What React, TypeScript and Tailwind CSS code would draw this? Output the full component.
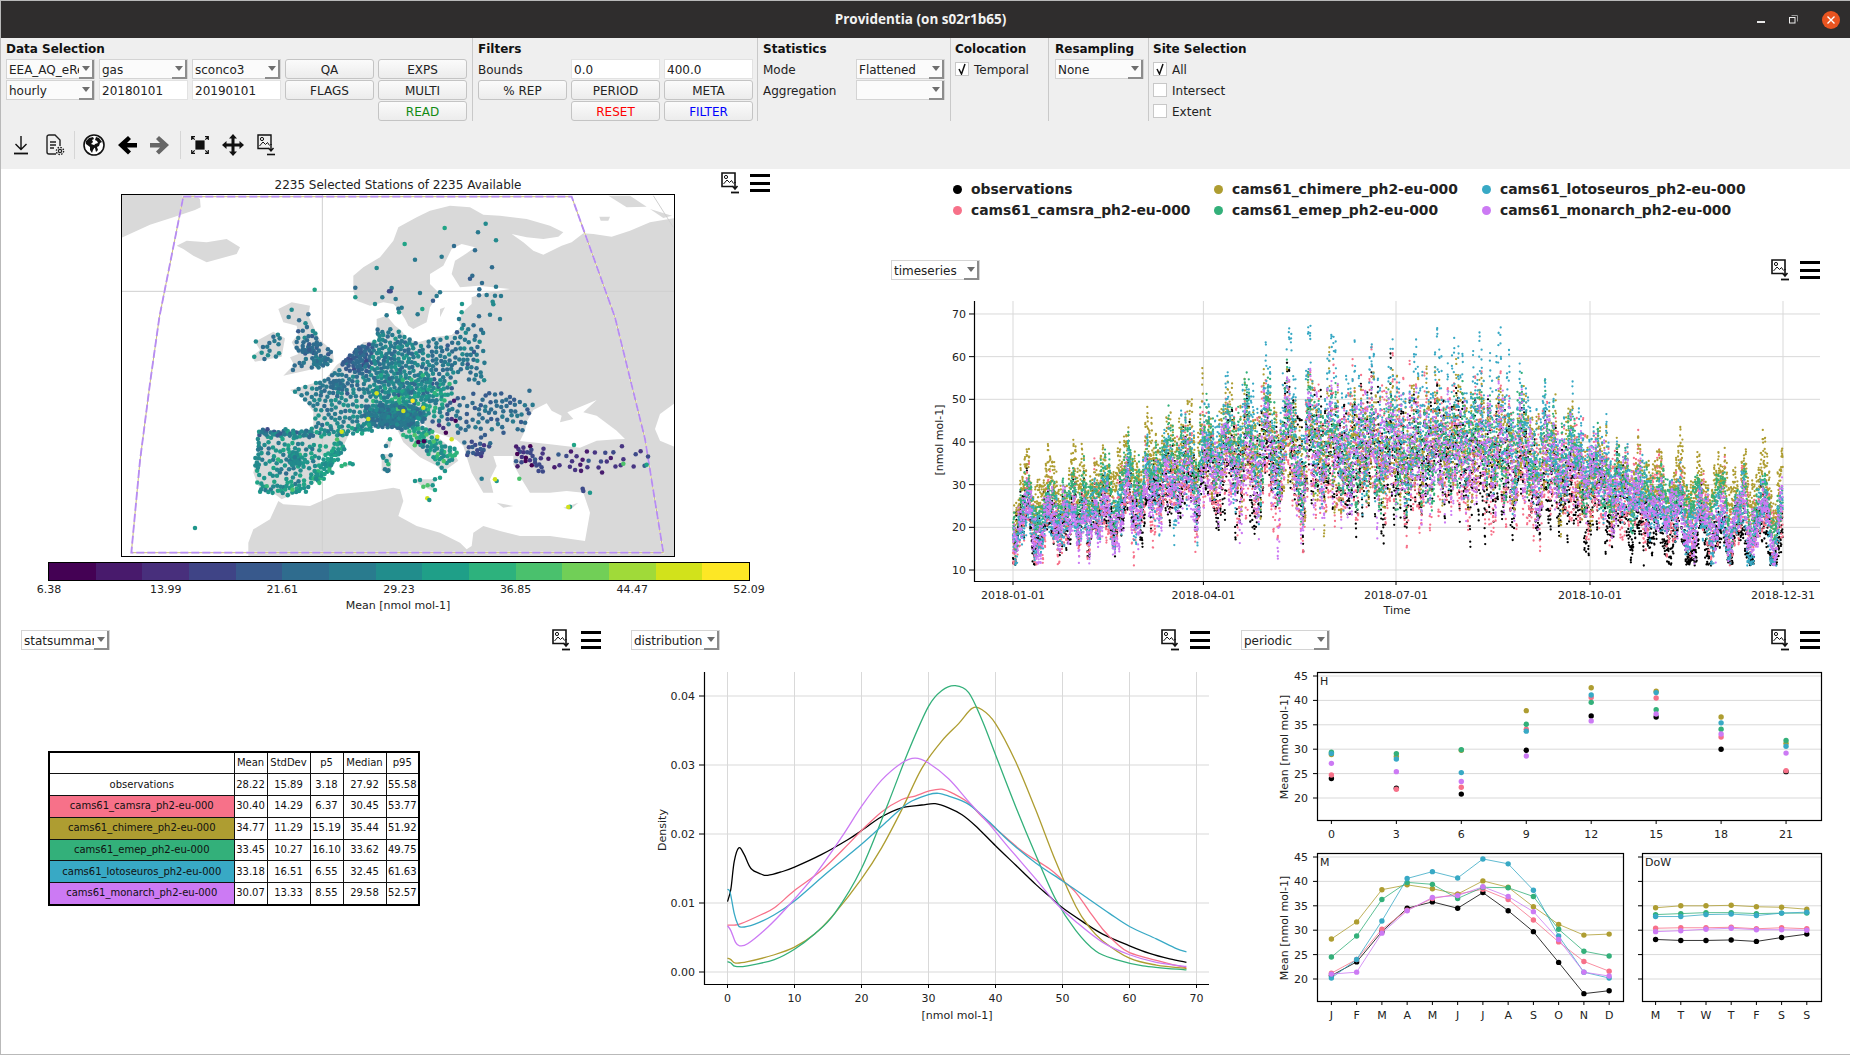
const COLORS = {
  observations: "#000000",
  camsra: "#f77189",
  chimere: "#ae9d31",
  emep: "#33b07a",
  lotoseuros: "#38a9c5",
  monarch: "#cc7af4",
};
const SERIES = [COLORS.observations, COLORS.camsra, COLORS.chimere, COLORS.emep, COLORS.lotoseuros, COLORS.monarch];

const GRID = "#d9d9d9";
const TXT = "#222222";

// seeded random so the picture stays the same on each load
const makeRng = (seed: number) => () => {
  seed = (seed + 0x6d2b79f5) | 0;
  let t = Math.imul(seed ^ (seed >>> 15), 1 | seed);
  t = (t + Math.imul(t ^ (t >>> 7), 61 | t)) ^ t;
  return ((t ^ (t >>> 14)) >>> 0) / 4294967296;
};

const VIRIDIS = ["#440154", "#481c6e", "#473582", "#3e4a89", "#365c8d", "#2f6c8e", "#29798e", "#238a8d", "#1f968b", "#20a486", "#2fb47c", "#4cc26c", "#74d055", "#a2da37", "#d0e11c", "#fde725"];

const MONTHLY = [
  [20.7, 23.5, 29.7, 34.5, 35.8, 34.5, 37.7, 34, 29.7, 23.4, 17, 17.6],
  [21.2, 24, 30.2, 34.1, 36.5, 37.4, 38.4, 36.3, 32.1, 27.6, 23.6, 21.6],
  [28.2, 31.7, 38.3, 39.3, 38.5, 37.4, 40.1, 38.8, 34.8, 31.2, 29, 29.2],
  [24.5, 28.8, 36.3, 39.8, 39.4, 36.5, 38.8, 38.7, 36.9, 30.2, 25.7, 24.7],
  [20.2, 24, 31.9, 40.6, 42, 40.7, 44.6, 43.6, 38.2, 28.8, 21.4, 20.2],
  [21, 21.4, 29.4, 34, 36.7, 37.1, 38.9, 36.9, 33.8, 28.1, 21.4, 20.6],
];
const HOURLY = [
  [24, 22, 20.8, 29.8, 36.8, 36.6, 30, 25.4],
  [24.7, 21.8, 22.2, 34.1, 40.6, 40.5, 32.5, 25.6],
  [28.9, 28.5, 29.8, 37.9, 42.6, 41.9, 36.6, 31.2],
  [29.4, 29.1, 29.9, 35.1, 39.6, 38.1, 34.1, 31.8],
  [29.1, 28, 25.2, 33.7, 41.1, 41.6, 35.4, 30.6],
  [27.1, 25.4, 23.4, 28.6, 35.8, 37.2, 33.1, 29.2],
];
const WEEKLY = [
  [28.1, 27.9, 27.9, 28, 27.7, 28.5, 29.2],
  [30.4, 30.5, 30.5, 30.6, 30.3, 30.5, 30.3],
  [34.6, 35, 35, 35.1, 34.8, 34.7, 34.3],
  [33.2, 33.4, 33.6, 33.6, 33.4, 33.5, 33.5],
  [32.8, 32.8, 33.2, 33.3, 33, 33.5, 33.7],
  [29.7, 29.9, 30.2, 30.4, 30.1, 30.1, 30],
];

const KDE: number[][][] = [
  [[0, 0.0102], [0.5, 0.012], [1, 0.016], [1.7, 0.018], [2.5, 0.017], [3.5, 0.015], [5, 0.0142], [6, 0.014], [8, 0.0145], [10, 0.0152], [14, 0.017], [18, 0.0192], [20, 0.0205], [23, 0.0225], [26, 0.0238], [29, 0.0242], [31, 0.0244], [33, 0.0238], [35, 0.0228], [37, 0.0212], [40, 0.0183], [43, 0.0155], [46, 0.0127], [48, 0.011], [50, 0.0093], [53, 0.0073], [56, 0.0055], [60, 0.0038], [63, 0.0027], [66, 0.0019], [68.5, 0.0014]],
  [[0, 0.0068], [1, 0.0068], [2, 0.007], [5, 0.0083], [7, 0.0093], [10, 0.0118], [14, 0.0147], [18, 0.0185], [20, 0.0205], [23, 0.0232], [26, 0.025], [28, 0.0255], [30, 0.0262], [32, 0.0265], [34, 0.0257], [36, 0.0245], [38, 0.0225], [40, 0.0208], [44, 0.0175], [48, 0.015], [50, 0.0133], [52, 0.0115], [54, 0.0088], [56, 0.0062], [58, 0.0042], [60, 0.0028], [64, 0.0017], [68.5, 0.0006]],
  [[0, 0.002], [0.5, 0.0018], [1.2, 0.0013], [3, 0.0015], [7, 0.0025], [10, 0.0036], [13, 0.0055], [16, 0.0085], [20, 0.0135], [23, 0.018], [26, 0.0235], [29, 0.0295], [32, 0.0335], [34.5, 0.036], [36.5, 0.0382], [38, 0.038], [40, 0.036], [43, 0.0305], [46, 0.0235], [49, 0.016], [52, 0.0095], [54, 0.0065], [56, 0.0045], [60, 0.002], [64, 0.001], [68.5, 0.0005]],
  [[0, 0.0015], [0.5, 0.0013], [1.2, 0.0008], [3, 0.0009], [7, 0.0018], [10, 0.0033], [13, 0.0055], [16, 0.0085], [20, 0.015], [24, 0.0245], [27, 0.032], [30, 0.0385], [32, 0.0408], [34, 0.0415], [36, 0.0405], [38, 0.0365], [40, 0.0315], [43, 0.024], [46, 0.017], [49, 0.0105], [52, 0.006], [55, 0.003], [58, 0.0018], [62, 0.0009], [68.5, 0.0003]],
  [[0, 0.012], [0.4, 0.0115], [1, 0.0085], [1.5, 0.007], [2, 0.0065], [4, 0.0069], [7, 0.0083], [10, 0.0103], [15, 0.0145], [20, 0.0185], [24, 0.022], [27, 0.0245], [30, 0.0257], [31.5, 0.0259], [33, 0.0255], [36, 0.0243], [39, 0.0218], [42, 0.019], [46, 0.0158], [50, 0.0132], [53, 0.0112], [57, 0.0085], [60, 0.0066], [64, 0.0048], [67, 0.0034], [68.5, 0.0029]],
  [[0, 0.0067], [0.5, 0.006], [1.2, 0.0043], [1.8, 0.0038], [3, 0.0041], [6, 0.0065], [9, 0.0095], [13, 0.014], [17, 0.0195], [20, 0.024], [23, 0.0278], [26, 0.0303], [28, 0.031], [30, 0.0303], [33, 0.028], [36, 0.0247], [39, 0.0215], [42, 0.018], [46, 0.0135], [49, 0.01], [52, 0.0073], [56, 0.0043], [60, 0.0025], [64, 0.0014], [68.5, 0.0008]],
];

const TABLE = [
  { name: "observations", bg: "bg-white", v: ["28.22", "15.89", "3.18", "27.92", "55.58"] },
  { name: "cams61_camsra_ph2-eu-000", bg: "bg-[#f77189]", v: ["30.40", "14.29", "6.37", "30.45", "53.77"] },
  { name: "cams61_chimere_ph2-eu-000", bg: "bg-[#ae9d31]", v: ["34.77", "11.29", "15.19", "35.44", "51.92"] },
  { name: "cams61_emep_ph2-eu-000", bg: "bg-[#33b07a]", v: ["33.45", "10.27", "16.10", "33.62", "49.75"] },
  { name: "cams61_lotoseuros_ph2-eu-000", bg: "bg-[#38a9c5]", v: ["33.18", "16.51", "6.55", "32.45", "61.63"] },
  { name: "cams61_monarch_ph2-eu-000", bg: "bg-[#cc7af4]", v: ["30.07", "13.33", "8.55", "29.58", "52.57"] },
];

const LEGEND = [
  ["observations", COLORS.observations],
  ["cams61_chimere_ph2-eu-000", COLORS.chimere],
  ["cams61_lotoseuros_ph2-eu-000", COLORS.lotoseuros],
  ["cams61_camsra_ph2-eu-000", COLORS.camsra],
  ["cams61_emep_ph2-eu-000", COLORS.emep],
  ["cams61_monarch_ph2-eu-000", COLORS.monarch],
];

const lerp = (arr: number[], p: number) => {
  const c = Math.max(0, Math.min(arr.length - 1, p));
  const i = Math.min(arr.length - 2, Math.floor(c));
  return arr[i] + (arr[i + 1] - arr[i]) * (c - i);
};

// timeseries dots, one path per model
const buildTimeseries = () => {
  const r = makeRng(11);
  const waves = Array.from({ length: 9 }, () => ({ p: 3 + r() * 16, ph: r() * 6.28, a: 0.5 + r() }));
  const shared = (d: number) => waves.reduce((s, w) => s + w.a * Math.sin((d / w.p) * 6.28 + w.ph), 0) / 2.4;
  return SERIES.map((_, s) => {
    const rs = makeRng(40 + s * 7);
    const own = Array.from({ length: 5 }, () => ({ p: 4 + rs() * 14, ph: rs() * 6.28 }));
    const mean = HOURLY[s].reduce((a, b) => a + b, 0) / 8;
    const cyc = HOURLY[s].concat(HOURLY[s][0]);
    let d = "";
    let dayShift = 0;
    let dayAmp = 1;
    for (let h = 0; h < 8736; h += 2) {
      const day = h / 24;
      const summer = Math.max(0, Math.sin(((day - 50) / 260) * Math.PI));
      if (h % 24 === 0) {
        dayShift = (rs() - 0.5) * (4 + summer * 12);
        dayAmp = 0.5 + rs();
      }
      const season = 0.45 + 0.6 * summer;
      const diurnal = (lerp(cyc, (h % 24) / 3) - mean) * season * dayAmp;
      const ownN = own.reduce((a, w) => a + Math.sin((day / w.p) * 6.28 + w.ph), 0);
      let v = lerp(MONTHLY[s], day / 30.4 - 0.5) + shared(day) * (2 + season) + ownN + dayShift + diurnal + (rs() - 0.5) * 2.5;
      if (s === 4 && diurnal > 0 && day > 120 && day < 240) v += rs() * 6 * Math.max(0, shared(day) + 0.5);
      if (v < 13) v = 13 + (13 - v) * 0.1 - rs() * 2;
      if (v > 64) v = 64 + (v - 64) * 0.3;
      d += `M${(1013 + day * 2.115).toFixed(1)} ${(570 - (v - 10) * 4.267).toFixed(1)}h0`;
    }
    return d;
  });
};
const TS_PATHS = buildTimeseries();

const smoothPath = (pts: number[][]) => {
  let d = `M${pts[0][0]} ${pts[0][1]}`;
  for (let i = 0; i < pts.length - 1; i++) {
    const p0 = pts[Math.max(0, i - 1)];
    const p1 = pts[i];
    const p2 = pts[i + 1];
    const p3 = pts[Math.min(pts.length - 1, i + 2)];
    d += `C${p1[0] + (p2[0] - p0[0]) / 6} ${p1[1] + (p2[1] - p0[1]) / 6} ${p2[0] - (p3[0] - p1[0]) / 6} ${p2[1] - (p3[1] - p1[1]) / 6} ${p2[0]} ${p2[1]}`;
  }
  return d;
};

// map outlines: 3 units per pixel, origin at (150,194) of the page
const OCEAN = [-87, 132, 0, 92, 70, 70, 135, 48, 152, 40, 150, 15, 130, 0, 1575, 0, 1575, 72, 1500, 85, 1440, 110, 1385, 128, 1330, 120, 1300, 118, 1265, 145, 1235, 155, 1180, 182, 1150, 170, 1120, 145, 1085, 120, 1130, 130, 1180, 135, 1225, 128, 1240, 115, 1200, 95, 1130, 75, 1050, 65, 1000, 62, 960, 40, 900, 35, 840, 50, 800, 70, 745, 100, 730, 140, 690, 190, 640, 220, 610, 245, 610, 290, 620, 320, 660, 335, 700, 325, 730, 330, 745, 345, 765, 375, 775, 395, 790, 405, 830, 385, 840, 340, 868, 298, 840, 270, 840, 240, 880, 215, 905, 165, 935, 150, 975, 160, 950, 178, 915, 200, 905, 240, 930, 280, 985, 275, 1080, 285, 1000, 298, 965, 310, 965, 330, 945, 348, 925, 378, 933, 400, 905, 423, 860, 428, 805, 445, 770, 433, 755, 410, 735, 395, 710, 365, 680, 375, 680, 420, 683, 440, 640, 445, 600, 483, 560, 513, 520, 563, 490, 568, 420, 588, 460, 613, 490, 653, 490, 693, 480, 708, 325, 708, 320, 726, 325, 776, 310, 836, 325, 876, 375, 901, 395, 916, 440, 896, 490, 871, 510, 836, 510, 786, 580, 756, 590, 736, 600, 713, 660, 703, 700, 700, 740, 703, 760, 745, 810, 790, 860, 815, 880, 835, 875, 856, 855, 861, 890, 826, 925, 800, 900, 760, 860, 726, 810, 680, 785, 670, 810, 688, 850, 713, 920, 738, 940, 756, 965, 836, 1000, 896, 1030, 896, 1020, 856, 1040, 816, 1030, 786, 1090, 786, 1090, 811, 1115, 856, 1140, 896, 1200, 896, 1250, 891, 1300, 896, 1320, 956, 1305, 1041, 1200, 1026, 1110, 1026, 1050, 1011, 1000, 996, 970, 1016, 965, 1056, 950, 1066, 930, 1046, 870, 1016, 800, 996, 745, 966, 760, 921, 750, 886, 730, 881, 670, 891, 560, 901, 480, 936, 400, 931, 385, 921, 360, 976, 310, 1006, 295, 1046, 295, 1089, -87, 1089];
const SEAS = [
  [1130, 683, 1150, 648, 1190, 628, 1205, 650, 1235, 665, 1230, 685, 1270, 675, 1252, 655, 1340, 618, 1300, 655, 1340, 665, 1400, 710, 1425, 735, 1400, 736, 1340, 740, 1290, 761, 1200, 751, 1110, 741, 1125, 710],
  [1575, 627, 1530, 660, 1515, 705, 1530, 740, 1575, 759],
];
const ISLANDS = [
  [80, 155, 110, 140, 170, 145, 230, 135, 270, 160, 260, 180, 170, 205, 130, 185, 100, 165],
  [385, 345, 425, 325, 480, 335, 475, 365, 510, 438, 548, 470, 552, 503, 500, 523, 400, 545, 432, 512, 420, 490, 445, 480, 425, 445, 445, 420, 440, 395, 400, 385],
  [315, 443, 370, 413, 405, 433, 395, 488, 315, 503, 305, 488, 330, 468],
  [715, 736, 725, 731, 720, 761, 700, 756],
  [695, 781, 725, 781, 722, 836, 695, 831],
  [790, 856, 855, 856, 850, 891, 815, 876],
  [1040, 926, 1090, 936, 1060, 941],
  [1240, 941, 1285, 926, 1260, 948],
  [565, 816, 610, 806, 590, 820],
  [870, 345, 885, 340, 870, 370],
  [1375, 5, 1440, 5, 1490, 38, 1430, 40],
  [1348, 68, 1380, 68, 1375, 80, 1352, 80],
  [1500, 45, 1566, 65, 1540, 72],
];

const toPath = (p: number[]) => {
  let d = `M${p[0]} ${p[1]}`;
  for (let i = 2; i < p.length; i += 2) d += `L${p[i]} ${p[i + 1]}`;
  return d + "Z";
};

const inside = (p: number[], x: number, y: number) => {
  let hit = false;
  for (let i = 0, j = p.length - 2; i < p.length; j = i, i += 2) {
    if (p[i + 1] > y !== p[j + 1] > y && x < ((p[j] - p[i]) * (y - p[i + 1])) / (p[j + 1] - p[i + 1]) + p[i]) hit = !hit;
  }
  return hit;
};

const onLand = (x: number, y: number) => {
  if (ISLANDS.some((p) => inside(p, x, y))) return true;
  return !inside(OCEAN, x, y) && !SEAS.some((p) => inside(p, x, y));
};

type Cluster = [number, number, number, number, number, number, number, number];
// x0, x1, y0, y1, count, mean, spread, min gap
const CLUSTERS: Cluster[] = [
  [460, 510, 443, 488, 22, 0.3, 0.05, 7],
  [430, 550, 393, 533, 36, 0.36, 0.07, 10],
  [490, 540, 490, 515, 16, 0.38, 0.04, 7],
  [310, 400, 408, 498, 16, 0.42, 0.07, 12],
  [585, 660, 460, 530, 85, 0.3, 0.06, 7],
  [620, 820, 423, 583, 230, 0.42, 0.08, 9],
  [810, 990, 403, 553, 100, 0.38, 0.07, 11],
  [540, 580, 558, 588, 20, 0.35, 0.04, 7],
  [500, 640, 533, 603, 60, 0.38, 0.06, 10],
  [430, 670, 573, 703, 120, 0.45, 0.07, 12],
  [680, 890, 543, 653, 170, 0.5, 0.15, 8],
  [660, 810, 633, 700, 170, 0.39, 0.08, 5],
  [940, 1130, 598, 708, 70, 0.33, 0.06, 12],
  [850, 930, 593, 703, 26, 0.24, 0.15, 12],
  [320, 510, 726, 890, 105, 0.5, 0.11, 10],
  [420, 450, 781, 811, 20, 0.47, 0.05, 4],
  [940, 1020, 736, 796, 20, 0.25, 0.1, 8],
  [1090, 1180, 761, 831, 30, 0.13, 0.12, 9],
  [1200, 1490, 761, 831, 34, 0.13, 0.1, 16],
];
// x0, y0, x1, y1, half width, count, mean, spread, min gap
const BANDS = [
  [775, 700, 905, 800, 36, 80, 0.56, 0.13, 8],
  [575, 745, 495, 860, 22, 55, 0.56, 0.1, 6],
  [500, 720, 680, 700, 14, 30, 0.5, 0.1, 8],
  [330, 885, 480, 885, 18, 28, 0.55, 0.1, 8],
  [325, 718, 490, 718, 13, 42, 0.4, 0.13, 7],
  [325, 730, 325, 840, 10, 18, 0.48, 0.1, 9],
];
const SPARSE = [[884, 102, 0.6], [1007, 89, 0.44], [984, 115, 0.42], [1038, 139, 0.44], [764, 150, 0.6], [912, 156, 0.34], [975, 169, 0.33], [875, 188, 0.38], [795, 197, 0.42], [680, 222, 0.45], [1026, 220, 0.36], [967, 245, 0.35], [960, 254, 0.28], [996, 267, 0.36], [1038, 278, 0.42], [988, 286, 0.35], [616, 281, 0.3], [494, 287, 0.62], [725, 282, 0.4], [717, 292, 0.2], [722, 292, 0.2], [810, 297, 0.38], [870, 295, 0.4], [860, 306, 0.37], [849, 320, 0.28], [987, 304, 0.3], [1010, 303, 0.42], [1035, 305, 0.42], [1053, 306, 0.42], [1028, 323, 0.45], [1030, 331, 0.45], [616, 310, 0.5], [697, 310, 0.42], [737, 315, 0.42], [675, 330, 0.48], [936, 330, 0.5], [745, 344, 0.36], [755, 341, 0.4], [817, 345, 0.6], [747, 355, 0.5], [935, 355, 0.5], [803, 361, 0.42], [987, 367, 0.32], [1020, 362, 0.42], [710, 364, 0.4], [425, 347, 0.45], [475, 361, 0.3], [416, 369, 0.4], [927, 375, 0.4], [1050, 375, 0.42], [680, 598, 0.95], [788, 620, 0.98], [820, 641, 0.95], [760, 651, 0.95], [655, 675, 0.95], [862, 728, 0.92], [905, 736, 0.92], [575, 713, 0.92], [575, 816, 0.68], [585, 811, 0.68], [600, 808, 0.6], [608, 811, 0.55], [547, 836, 0.5], [720, 736, 0.62], [708, 756, 0.4], [698, 786, 0.4], [722, 784, 0.4], [710, 801, 0.5], [715, 811, 0.65], [705, 826, 0.4], [715, 829, 0.35], [700, 791, 0.45], [712, 831, 0.4], [795, 861, 0.5], [810, 858, 0.5], [820, 878, 0.7], [833, 874, 0.7], [848, 874, 0.5], [855, 888, 0.6], [832, 913, 0.9], [838, 918, 0.5], [855, 856, 0.55], [870, 851, 0.6], [875, 821, 0.45], [885, 831, 0.5], [805, 744, 0.02], [822, 742, 0.02], [1272, 753, 0.6], [995, 854, 0.42], [1040, 861, 0.5], [1035, 856, 0.9], [1108, 854, 0.7], [1298, 884, 0.2], [1300, 891, 0.2], [1320, 896, 0.55], [1260, 938, 0.5], [1255, 939, 0.9], [1420, 809, 0.75], [135, 1002, 0.55], [1490, 812, 0.6]];

const buildStations = () => {
  const r = makeRng(5);
  const out: { x: number; y: number; c: string }[] = [];
  const toColor = (v: number) => VIRIDIS[Math.max(0, Math.min(15, Math.round(v * 15)))];
  const tri = () => r() + r() - 1;
  CLUSTERS.forEach(([x0, x1, y0, y1, n, m, s, gap]) => {
    for (let i = 0; i < n; i++) {
      for (let t = 0; t < 14; t++) {
        const x = (x0 + x1) / 2 + tri() * (x1 - x0) * 0.64;
        const y = (y0 + y1) / 2 + tri() * (y1 - y0) * 0.64;
        if (!onLand(x, y) || out.some((p) => Math.hypot(p.x - x, p.y - y) < gap)) continue;
        out.push({ x, y, c: toColor(m + tri() * s * 1.7) });
        break;
      }
    }
  });
  BANDS.forEach(([x0, y0, x1, y1, w, n, m, s, gap]) => {
    const len = Math.hypot(x1 - x0, y1 - y0);
    for (let i = 0; i < n; i++) {
      for (let t = 0; t < 10; t++) {
        const a = r();
        const off = tri() * w;
        const x = x0 + (x1 - x0) * a - ((y1 - y0) / len) * off;
        const y = y0 + (y1 - y0) * a + ((x1 - x0) / len) * off;
        if (out.some((p) => Math.hypot(p.x - x, p.y - y) < gap)) continue;
        out.push({ x, y, c: toColor(m + tri() * s * 1.7) });
        break;
      }
    }
  });
  SPARSE.forEach(([x, y, v]) => out.push({ x, y, c: toColor(v) }));
  return out;
};
const STATIONS = buildStations();

const SaveIcon = () => (
  <svg width="18" height="22" viewBox="0 0 18 22" fill="none" stroke="#111">
    <path d="M12 14.5H1V1h13v10" strokeWidth="1.6" />
    <circle cx="5" cy="5" r="1.6" strokeWidth="1" />
    <path d="M2.5 12l3.5-4 2.5 2.5 2-2 2 3" strokeWidth="1" />
    <path d="M14 10v6M11.5 14l2.5 3 2.5-3" strokeWidth="1.6" />
    <path d="M10 20.5h8" strokeWidth="1.8" />
  </svg>
);

const Hamburger = () => (
  <div className="flex h-[18px] w-[20px] flex-col justify-between">
    <div className="h-[3px] bg-black" />
    <div className="h-[3px] bg-black" />
    <div className="h-[3px] bg-black" />
  </div>
);

const PlotActions = () => (
  <div className="flex items-center gap-[11px]">
    <SaveIcon />
    <Hamburger />
  </div>
);

const Combo = ({ value, white = false }: { value: string; white?: boolean }) => (
  <div className={`flex h-[20px] w-[89px] items-center border border-[#d4d4d4] pl-[2px] text-[12px] text-[#222] ${white ? "bg-white" : "bg-[#fbfbfb]"}`}>
    <span className="flex-1 overflow-hidden whitespace-nowrap pt-px">{value}</span>
    <span className="flex h-[19px] w-[15px] shrink-0 items-center justify-center border-r-2 border-b-2 border-[#8c8c8c]">
      <span className="h-0 w-0 border-x-[4px] border-t-[5px] border-x-transparent border-t-[#6d6d6d]" />
    </span>
  </div>
);

const Field = ({ value }: { value: string }) => (
  <div className="flex h-[20px] w-[89px] items-center border border-[#e2e2e2] bg-white pl-[2px] pt-px text-[12px] text-[#222]">{value}</div>
);

const Btn = ({ label, color = "text-[#222]" }: { label: string; color?: string }) => (
  <div className={`flex h-[20px] w-[89px] items-center justify-center rounded-[3px] border border-[#c4c4c4] bg-gradient-to-b from-[#fbfbfb] to-[#ececec] pt-px text-[12px] ${color}`}>{label}</div>
);

const Check = ({ on, label }: { on?: boolean; label: string }) => (
  <div className="flex h-[20px] items-center gap-[5px] text-[12px] text-[#222]">
    <span className="flex h-[14px] w-[14px] items-center justify-center border border-[#c8c8c8] bg-white">
      {on && (
        <svg width="10" height="12" viewBox="0 0 10 12" fill="none" stroke="#111" strokeWidth="1.5">
          <path d="M2 6l2.5 5L8 1" />
        </svg>
      )}
    </span>
    <span className="pt-px">{label}</span>
  </div>
);

const Label = ({ text }: { text: string }) => <div className="flex h-[20px] items-center pt-px text-[12px] text-[#222]">{text}</div>;

const Heading = ({ text }: { text: string }) => <div className="h-[21px] pt-[4px] text-[12px] font-bold leading-[15px] text-[#111]">{text}</div>;

const Section = ({ title, className, children }: { title: string; className: string; children: React.ReactNode }) => (
  <div className={`flex h-[83px] flex-col border-r border-[#c9c9c9] ${className}`}>
    <Heading text={title} />
    {children}
  </div>
);

const Toolbar = () => (
  <div className="h-[131px] shrink-0 bg-[#efefef]">
    <div className="flex">
      <Section title="Data Selection" className="w-[472px] pl-[5px]">
        <div className="grid grid-cols-[repeat(5,89px)] gap-x-[4px] gap-y-px">
          <Combo value="EEA_AQ_eRe" />
          <Combo value="gas" />
          <Combo value="sconco3" />
          <Btn label="QA" />
          <Btn label="EXPS" />
          <Combo value="hourly" />
          <Field value="20180101" />
          <Field value="20190101" />
          <Btn label="FLAGS" />
          <Btn label="MULTI" />
          <div className="col-start-5">
            <Btn label="READ" color="text-[#118a11]" />
          </div>
        </div>
      </Section>
      <Section title="Filters" className="w-[285px] pl-[5px]">
        <div className="grid grid-cols-[repeat(3,89px)] gap-x-[4px] gap-y-px">
          <Label text="Bounds" />
          <Field value="0.0" />
          <Field value="400.0" />
          <Btn label="% REP" />
          <Btn label="PERIOD" />
          <Btn label="META" />
          <div className="col-start-2">
            <Btn label="RESET" color="text-[#ff0000]" />
          </div>
          <Btn label="FILTER" color="text-[#0000ff]" />
        </div>
      </Section>
      <Section title="Statistics" className="w-[193px] pl-[5px]">
        <div className="grid grid-cols-[93px_89px] gap-y-px">
          <Label text="Mode" />
          <Combo value="Flattened" />
          <Label text="Aggregation" />
          <Combo value="" />
        </div>
      </Section>
      <Section title="Colocation" className="w-[98px] pl-[4px]">
        <Check on label="Temporal" />
      </Section>
      <Section title="Resampling" className="w-[100px] pl-[6px]">
        <Combo value="None" />
      </Section>
      <div className="flex flex-col pl-[4px]">
        <Heading text="Site Selection" />
        <div className="flex flex-col gap-y-px">
          <Check on label="All" />
          <Check label="Intersect" />
          <Check label="Extent" />
        </div>
      </div>
    </div>
    <div className="mt-[9px] flex h-[30px] items-center pl-[12px]">
      <svg width="16" height="20" viewBox="0 0 16 20" fill="none" stroke="#111" strokeWidth="1.4">
        <path d="M8 1v13M2.5 9L8 14.5 13.5 9" />
        <path d="M1 18.5h14" strokeWidth="1.8" />
      </svg>
      <svg className="ml-[16px]" width="20" height="22" viewBox="0 0 20 22" fill="none" stroke="#222" strokeWidth="1.4">
        <path d="M11 20H4a2 2 0 0 1-2-2V3a2 2 0 0 1 2-2h6l5 5v6" />
        <path d="M5 8h6M5 11h6M5 14h4" />
        <circle cx="15" cy="17" r="1.6" strokeWidth="1.2" />
        <circle cx="15" cy="17" r="3.6" strokeWidth="1.4" strokeDasharray="1.6 1.2" />
      </svg>
      <div className="ml-[9px] mr-[10px] h-[28px] w-px bg-[#d6d6d6]" />
      <svg className="ml-[-2px]" width="22" height="22" viewBox="0 0 22 22">
        <circle cx="11" cy="11" r="10" fill="#fff" stroke="#111" strokeWidth="1.6" />
        <path d="M3 7l3-3 4-1 1 2-2 1 1 2-2 2 3 1 1 2-2 3-1 3-2-3v-3L3 10z" fill="#111" />
        <path d="M13 3l3 1 3 4-2 1-1 3-2 1 1 3-2 2-1-4-2-1 2-3 3-1-1-2-2-1z" fill="#111" />
      </svg>
      <svg className="ml-[13px]" width="19" height="20" viewBox="0 0 19 20" fill="#000">
        <path d="M10 1l3 3-4 4h10v4.5H9l4 4-3 3L0 10z" />
      </svg>
      <svg className="ml-[13px]" width="19" height="20" viewBox="0 0 19 20" fill="#666">
        <path d="M9 1L6 4l4 4H0v4.5h10l-4 4 3 3 10-9.500z" />
      </svg>
      <div className="ml-[11px] h-[28px] w-px bg-[#d6d6d6]" />
      <svg className="ml-[10px]" width="18" height="18" viewBox="0 0 18 18" fill="none" stroke="#111" strokeWidth="1.2">
        <rect x="5" y="5" width="8" height="8" fill="#111" />
        <path d="M.7 4V.7H4M.7.7l3 3M14 .7h3.3V4M17.3.7l-3 3M.7 14v3.3H4M.7 17.3l3-3M14 17.3h3.3V14M17.3 17.3l-3-3" />
      </svg>
      <svg className="ml-[13px]" width="22" height="22" viewBox="0 0 22 22" fill="#111">
        <path d="M11 0l4 4.500h-2.500V9.500H17.500V7l4.500 4-4.500 4v-2.500H12.500V17.500H15l-4 4.500-4-4.500h2.500V12.500H4.500V15L0 11l4.500-4v2.500H9.500V4.500H7z" />
      </svg>
      <svg className="ml-[11px]" width="22" height="22" viewBox="0 0 18 22" fill="none" stroke="#111">
        <path d="M12 14.5H1V1h13v10" strokeWidth="1.4" />
        <circle cx="5" cy="5" r="1.6" strokeWidth="1" />
        <path d="M2.5 12l3.5-4 2.5 2.5 2-2 2 3" strokeWidth="1" />
        <path d="M14 10v6M11.5 14l2.5 3 2.5-3" strokeWidth="1.4" />
        <path d="M10 20.5h8" strokeWidth="1.6" />
      </svg>
    </div>
  </div>
);

const DOMAIN = "M100 8L1265 8 1395 370 1485 735 1540 1076-56 1076-30 800 0 568 28 370Z";

const MapChart = () => (
  <svg className="ml-[121px] block" width="554" height="363" viewBox="121 194 554 363">
    <rect x="121" y="194" width="554" height="363" fill="#d9d9d9" />
    <g transform="translate(150 194) scale(0.33333)">
      <path d={toPath(OCEAN)} fill="#fff" />
      {SEAS.map((p, i) => (
        <path key={i} d={toPath(p)} fill="#fff" />
      ))}
      {ISLANDS.map((p, i) => (
        <path key={i} d={toPath(p)} fill="#d9d9d9" />
      ))}
      <path d="M517 -10V1089M-87 292H1575M1510 5L1570 100" stroke="#cfcfcf" strokeWidth="3" fill="none" />
      <path d={DOMAIN} fill="none" stroke="#fff" strokeWidth="5" />
      <path d={DOMAIN} fill="none" stroke="#ae9d31" strokeWidth="2" />
      <path d={DOMAIN} fill="none" stroke="#b78cf4" strokeWidth="5.500" strokeDasharray="24 9" />
      {STATIONS.map((s, i) => (
        <circle key={i} cx={s.x} cy={s.y} r="6.800" fill={s.c} />
      ))}
    </g>
    <rect x="121.500" y="194.500" width="553" height="362" fill="none" stroke="#000" />
  </svg>
);

const TS_DATES = [["2018-01-01", 1013], ["2018-04-01", 1203.4], ["2018-07-01", 1396], ["2018-10-01", 1590], ["2018-12-31", 1783]] as const;

const TimeseriesChart = () => (
  <svg className="block" width="962" height="335" viewBox="888 290 962 335" fontFamily="DejaVu Sans" fontSize="11" fill={TXT}>
    {TS_DATES.map(([l, x]) => (
      <g key={l}>
        <path d={`M${x} 301V581`} stroke={GRID} />
        <path d={`M${x} 581v4`} stroke="#000" />
        <text x={x} y="599" textAnchor="middle">{l}</text>
      </g>
    ))}
    {[10, 20, 30, 40, 50, 60, 70].map((v) => {
      const y = 570 - (v - 10) * 4.267;
      return (
        <g key={v}>
          <path d={`M974 ${y}H1820`} stroke={GRID} />
          <path d={`M969 ${y}h5`} stroke="#000" />
          <text x="966" y={y + 4} textAnchor="end">{v}</text>
        </g>
      );
    })}
    {TS_PATHS.map((d, i) => (
      <path key={i} d={d} stroke={SERIES[i]} strokeWidth="2.3" strokeLinecap="round" fill="none" />
    ))}
    <path d="M974.5 301V581.5H1820" stroke="#000" strokeWidth="1.2" fill="none" />
    <text x="1397" y="614" textAnchor="middle">Time</text>
    <text transform="translate(943 440) rotate(-90)" textAnchor="middle">[nmol mol-1]</text>
  </svg>
);

const DistributionChart = () => {
  const px = (v: number) => 727.5 + v * 6.7;
  const py = (v: number) => 972 - v * 6900;
  return (
    <svg className="block" width="609" height="399" viewBox="621 655 609 399" fontFamily="DejaVu Sans" fontSize="11" fill={TXT}>
      {[0, 10, 20, 30, 40, 50, 60, 70].map((v) => (
        <g key={v}>
          <path d={`M${px(v)} 672V984`} stroke={GRID} />
          <path d={`M${px(v)} 984v4`} stroke="#000" />
          <text x={px(v)} y="1002" textAnchor="middle">{v}</text>
        </g>
      ))}
      {["0.00", "0.01", "0.02", "0.03", "0.04"].map((l) => (
        <g key={l}>
          <path d={`M704 ${py(+l)}H1209`} stroke={GRID} />
          <path d={`M699 ${py(+l)}h5`} stroke="#000" />
          <text x="695" y={py(+l) + 4} textAnchor="end">{l}</text>
        </g>
      ))}
      {KDE.map((pts, i) => (
        <path key={i} d={smoothPath(pts.map(([x, y]) => [px(x), py(y)]))} fill="none" stroke={SERIES[i]} strokeWidth="1.3" />
      ))}
      <path d="M704.5 672V984.5H1209" stroke="#000" strokeWidth="1.2" fill="none" />
      <text x="957" y="1019" textAnchor="middle">[nmol mol-1]</text>
      <text transform="translate(666 830) rotate(-90)" textAnchor="middle">Density</text>
    </svg>
  );
};

const PANEL_TICKS = [20, 25, 30, 35, 40, 45];

const PeriodicPanel = ({ x0, x1, y0, y1, zero, labels, step, start, data, letter, lines, yAxis }: { x0: number; x1: number; y0: number; y1: number; zero: number; labels: string[]; step: number; start: number; data: number[][]; letter: string; lines: boolean; yAxis: boolean }) => {
  const py = (v: number) => zero - (v - 20) * 4.88;
  return (
    <g>
      {PANEL_TICKS.map((v) => (
        <g key={v}>
          <path d={`M${x0} ${py(v)}H${x1}`} stroke={GRID} />
          <path d={`M${x0 - 4} ${py(v)}h4`} stroke="#000" />
          {yAxis && <text x={x0 - 9} y={py(v) + 4} textAnchor="end">{v}</text>}
        </g>
      ))}
      {labels.map((l, i) => (
        <g key={i}>
          <path d={`M${start + i * step} ${y1}v4`} stroke="#000" />
          <text x={start + i * step} y={y1 + 18} textAnchor="middle">{l}</text>
        </g>
      ))}
      {data.map((vals, s) => (
        <g key={s} fill={SERIES[s]}>
          {lines && <polyline points={vals.map((v, i) => `${start + i * step},${py(v)}`).join(" ")} fill="none" stroke={SERIES[s]} strokeWidth="0.8" />}
          {vals.map((v, i) => (
            <circle key={i} cx={start + i * step} cy={py(v)} r="2.7" />
          ))}
        </g>
      ))}
      <rect x={x0 + 0.5} y={y0 + 0.5} width={x1 - x0} height={y1 - y0} fill="none" stroke="#000" strokeWidth="1.2" />
      <text x={x0 + 3} y={y0 + 13} fontSize="11">{letter}</text>
    </g>
  );
};

const PeriodicChart = () => (
  <svg className="block" width="620" height="399" viewBox="1230 655 620 399" fontFamily="DejaVu Sans" fontSize="11" fill={TXT}>
    <PeriodicPanel x0={1317} x1={1821} y0={672} y1={820} zero={798} labels={["0", "3", "6", "9", "12", "15", "18", "21"]} step={64.95} start={1331.4} data={HOURLY} letter="H" lines={false} yAxis />
    <PeriodicPanel x0={1317} x1={1623} y0={853} y1={1001} zero={979} labels={["J", "F", "M", "A", "M", "J", "J", "A", "S", "O", "N", "D"]} step={25.25} start={1331.4} data={MONTHLY} letter="M" lines yAxis />
    <PeriodicPanel x0={1642} x1={1821} y0={853} y1={1001} zero={979} labels={["M", "T", "W", "T", "F", "S", "S"]} step={25.2} start={1655.6} data={WEEKLY} letter="DoW" lines yAxis={false} />
    <text transform="translate(1288 747) rotate(-90)" textAnchor="middle">Mean [nmol mol-1]</text>
    <text transform="translate(1288 928) rotate(-90)" textAnchor="middle">Mean [nmol mol-1]</text>
  </svg>
);

const COLOR_STEPS = ["bg-[#440154]", "bg-[#481a6c]", "bg-[#482f7c]", "bg-[#3f4486]", "bg-[#38598c]", "bg-[#2f6c8e]", "bg-[#297b8e]", "bg-[#218d8c]", "bg-[#1f9f88]", "bg-[#2db27d]", "bg-[#4ac16d]", "bg-[#71cf57]", "bg-[#a0da39]", "bg-[#d2e21b]", "bg-[#fde725]"];

const App = () => (
  <div className="flex h-screen w-full flex-col overflow-hidden border-t border-b border-l border-[#b9b9b9] bg-white font-['DejaVu_Sans',sans-serif]">
    <div className="flex h-[37px] shrink-0 items-center bg-[#2f2d2d]">
      <div className="flex-1" />
      <div className="font-['Open_Sans',sans-serif] text-[13.5px] font-bold text-[#f2f2f2]">Providentia (on s02r1b65)</div>
      <div className="flex flex-1 items-center justify-end pr-[10px]">
        <div className="mt-[4px] h-[2px] w-[8px] bg-[#e8e8e8]" />
        <svg className="ml-[24px]" width="9" height="9" viewBox="0 0 9 9" fill="none">
          <rect x="0.500" y="2.500" width="5.500" height="5.500" stroke="#eee" />
          <path d="M2.500 .5h6v6" stroke="#999" />
        </svg>
        <div className="ml-[24px] flex h-[18px] w-[18px] items-center justify-center rounded-full bg-[#e95420]">
          <svg width="8" height="8" viewBox="0 0 8 8" stroke="#fff" strokeWidth="1.400">
            <path d="M.5 .5l7 7M7.500 .5l-7 7" />
          </svg>
        </div>
      </div>
    </div>
    <Toolbar />
    <div className="flex h-[457px] shrink-0">
      <div className="w-[888px]">
        <div className="flex h-[25px]">
          <div className="ml-[120px] w-[554px] pt-[9px] text-center text-[12px] leading-[15px] text-[#222]">2235 Selected Stations of 2235 Available</div>
          <div className="ml-[46px] pt-[3px]">
            <PlotActions />
          </div>
        </div>
        <div className="ml-[-1px]">
          <MapChart />
        </div>
        <div className="ml-[47px] mt-[5px] flex h-[19px] w-[702px] border border-black">
          {COLOR_STEPS.map((c) => (
            <div key={c} className={`flex-1 ${c}`} />
          ))}
        </div>
        <div className="ml-[18px] mt-px flex w-[760px] justify-between text-[11px] leading-[15px] text-[#222]">
          {["6.38", "13.99", "21.61", "29.23", "36.85", "44.47", "52.09"].map((l) => (
            <div key={l} className="w-[60px] text-center">{l}</div>
          ))}
        </div>
        <div className="ml-[18px] w-[758px] pt-px text-center text-[11px] leading-[15px] text-[#222]">Mean [nmol mol-1]</div>
      </div>
      <div className="flex-1">
        <div className="ml-[65px] grid grid-cols-[261px_268px_1fr] pt-[10px] text-[13.9px] font-bold leading-[21px] text-[#222]">
          {LEGEND.map(([name, color]) => (
            <div key={name} className="flex items-center gap-[9px]">
              <span className="h-[9px] w-[9px] rounded-full" style={{ backgroundColor: color }} />
              {name}
            </div>
          ))}
        </div>
        <div className="mt-[38px] flex items-center justify-between pl-[3px] pr-[30px]">
          <Combo value="timeseries" white />
          <PlotActions />
        </div>
        <div className="mt-[9px]">
          <TimeseriesChart />
        </div>
      </div>
    </div>
    <div className="flex min-h-0 flex-1">
      <div className="w-[621px] px-[20px] pt-[3px]">
        <div className="flex items-center justify-between">
          <Combo value="statsummary" white />
          <PlotActions />
        </div>
        <table className="ml-[27px] mt-[100px] w-[370px] table-fixed border-collapse border-2 border-black text-center text-[10px] leading-[12px] text-[#111]">
          <colgroup>
            <col className="w-[185px]" />
            <col className="w-[33px]" />
            <col className="w-[43px]" />
            <col className="w-[33px]" />
            <col className="w-[43px]" />
            <col className="w-[33px]" />
          </colgroup>
          <tbody>
            <tr className="h-[21.8px]">
              <td className="border border-[#111]" />
              {["Mean", "StdDev", "p5", "Median", "p95"].map((h) => (
                <td key={h} className="border border-[#111]">{h}</td>
              ))}
            </tr>
            {TABLE.map((row) => (
              <tr key={row.name} className="h-[21.8px]">
                <td className={`border border-[#111] ${row.bg}`}>{row.name}</td>
                {row.v.map((v, i) => (
                  <td key={i} className="border border-[#111]">{v}</td>
                ))}
              </tr>
            ))}
          </tbody>
        </table>
      </div>
      <div className="w-[609px]">
        <div className="flex items-center justify-between pl-[10px] pr-[20px] pt-[3px]">
          <Combo value="distribution" white />
          <PlotActions />
        </div>
        <div className="mt-[4px]">
          <DistributionChart />
        </div>
      </div>
      <div className="flex-1">
        <div className="flex items-center justify-between pl-[11px] pr-[30px] pt-[3px]">
          <Combo value="periodic" white />
          <PlotActions />
        </div>
        <div className="mt-[4px]">
          <PeriodicChart />
        </div>
      </div>
    </div>
  </div>
);

export default App;
